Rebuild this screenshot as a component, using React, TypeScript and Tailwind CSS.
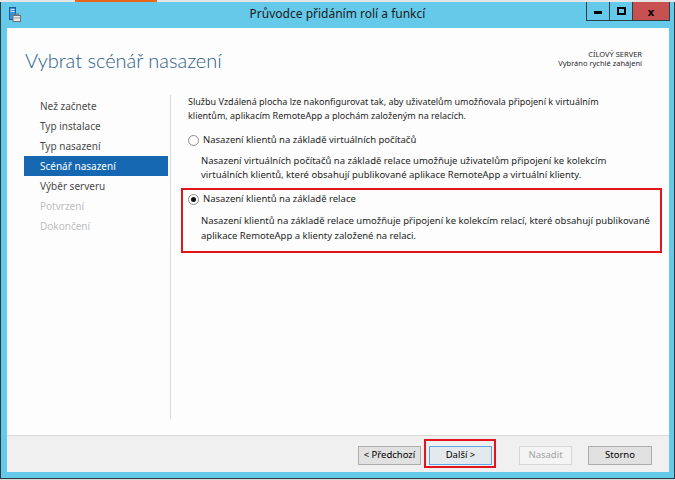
import React from "react";

type StepState = "done" | "active" | "disabled";

const steps: { label: string; state: StepState }[] = [
  { label: "Než začnete", state: "done" },
  { label: "Typ instalace", state: "done" },
  { label: "Typ nasazení", state: "done" },
  { label: "Scénář nasazení", state: "active" },
  { label: "Výběr serveru", state: "done" },
  { label: "Potvrzení", state: "disabled" },
  { label: "Dokončení", state: "disabled" },
];

// malá ikonka v titulku okna (server + kufřík)
const TitleIcon = () => (
  <svg width="12" height="15" viewBox="0 0 12 15">
    <rect x="0.5" y="0.5" width="6" height="12" fill="#3d8fd6" stroke="#1d5e98" />
    <rect x="1.5" y="2" width="4" height="1" fill="#cfe6fa" />
    <rect x="1.5" y="4" width="4" height="1" fill="#cfe6fa" />
    <rect x="4" y="8.5" width="7.5" height="6" fill="#e9e9e9" stroke="#6f6f6f" />
    <rect x="6" y="7" width="3.5" height="1.5" fill="none" stroke="#6f6f6f" />
    <rect x="4.5" y="10.5" width="6.5" height="1" fill="#9a9a9a" />
  </svg>
);

const Radio = ({ checked }: { checked?: boolean }) => (
  <span className="w-[11px] h-[11px] rounded-full border border-[#8c8c8c] bg-white flex items-center justify-center shrink-0">
    {checked && <span className="w-[5px] h-[5px] rounded-full bg-[#111]" />}
  </span>
);

const App = () => {
  return (
    <div className="w-[675px] h-[480px] bg-[#d8d8d8] overflow-hidden font-['Noto_Sans',sans-serif]">
      {/* proužek plochy nad oknem */}
      <div className="h-[2px] bg-[#e6e6e6] flex">
        <div className="ml-[75px] w-[82px] bg-[#e8651c]" />
      </div>

      <div className="h-[477px] bg-[#65c9ea] border-x border-b border-[#2e3a40] flex flex-col">
        {/* titulek */}
        <div className="h-[26px] grid grid-cols-[1fr_auto_1fr]">
          <div className="pl-[8px] pt-[5px]">
            <TitleIcon />
          </div>
          <div className="text-[12px] leading-[24px] text-[#1b1b1b]">
            Průvodce přidáním rolí a funkcí
          </div>
          <div className="flex justify-end items-start pr-[4px]">
            <div className="w-[23px] h-[19px] border-l border-b border-[#2b3f48] flex items-center justify-center">
              <span className="w-[8px] h-[3px] bg-black mt-[2px]" />
            </div>
            <div className="w-[23px] h-[19px] border-l border-b border-[#2b3f48] flex items-center justify-center">
              <span className="w-[9px] h-[8px] border-2 border-black" />
            </div>
            <div className="w-[38px] h-[19px] border-x border-b border-[#2b3f48] bg-[#c75050] flex items-center justify-center text-[11px] font-bold leading-none text-black">
              x
            </div>
          </div>
        </div>

        {/* obsah okna */}
        <div className="ml-[6px] mr-[5px] h-[444px] flex flex-col">
          <div className="h-[407px] bg-[#fdfdfd] flex flex-col">
            <div className="h-[67px] flex justify-between pl-[18px] pr-[27px]">
              <h1 className="pt-[20px] font-['Lato',sans-serif] font-light text-[20px] leading-[24px] text-[#2b5c85]">
                Vybrat scénář nasazení
              </h1>
              <div className="pt-[22px] text-right text-[7.5px] leading-[9px] text-[#2a2a2a]">
                <div>CÍLOVÝ SERVER</div>
                <div>Vybráno rychlé zahájení</div>
              </div>
            </div>

            <div className="flex">
              <div className="w-[163px] pl-[17px] pt-[1px]">
                {steps.map((s) => (
                  <div
                    key={s.label}
                    className={`w-[144px] h-[20px] pl-[16px] text-[10px] leading-[20px] ${
                      s.state === "active"
                        ? "bg-[#1467b0] text-white"
                        : s.state === "disabled"
                        ? "text-[#bdbdbd]"
                        : "text-[#4a4a4a]"
                    }`}
                  >
                    {s.label}
                  </div>
                ))}
              </div>

              <div className="w-px h-[324px] bg-[#dadada]" />

              <div className="ml-[10px] w-[481px] text-[9.5px] text-[#1e1e1e] whitespace-nowrap">
                <p className="pl-[7px] text-[9px] leading-[14px]">
                  Službu Vzdálená plocha lze nakonfigurovat tak, aby uživatelům umožňovala připojení k virtuálním
                  <br />
                  klientům, aplikacím RemoteApp a plochám založeným na relacích.
                </p>

                <div className="mt-[10px] pl-[7px] h-[14px] flex items-center gap-[4px]">
                  <Radio />
                  <span>Nasazení klientů na základě virtuálních počítačů</span>
                </div>
                <p className="mt-[7px] pl-[20px] leading-[14px]">
                  Nasazení virtuálních počítačů na základě relace umožňuje uživatelům připojení ke kolekcím
                  <br />
                  virtuálních klientů, které obsahují publikované aplikace RemoteApp a virtuální klienty.
                </p>

                <div className="mt-[6px] border-2 border-[#e3151c] pt-[2px] pb-[8px]">
                  <div className="pl-[5px] h-[14px] flex items-center gap-[4px]">
                    <Radio checked />
                    <span>Nasazení klientů na základě relace</span>
                  </div>
                  <p className="mt-[7px] pl-[18px] leading-[15px]">
                    Nasazení klientů na základě relace umožňuje připojení ke kolekcím relací, které obsahují publikované
                    <br />
                    aplikace RemoteApp a klienty založené na relaci.
                  </p>
                </div>
              </div>
            </div>
          </div>

          {/* tlačítka */}
          <div className="h-[37px] border-t border-[#dadada] bg-[#f0f0f0] flex justify-end items-start pt-[10px] pr-[17px] text-[9.5px]">
            <button className="w-[63px] h-[19px] border border-[#adadad] bg-[#e1e1e1] text-black">
              &lt; Předchozí
            </button>
            <div className="relative ml-[8px]">
              <button className="w-[63px] h-[19px] border border-[#5ea6e6] bg-[#e4e9ee] text-black">
                Další &gt;
              </button>
              <span className="absolute -left-[5px] -right-[4px] -top-[7px] -bottom-[3px] border-2 border-[#e3151c] pointer-events-none" />
            </div>
            <button disabled className="ml-[27px] w-[53px] h-[19px] border border-[#d6d6d6] bg-[#f4f4f4] text-[#a3a3a3]">
              Nasadit
            </button>
            <button className="ml-[16px] w-[64px] h-[19px] border border-[#adadad] bg-[#e1e1e1] text-black">
              Storno
            </button>
          </div>
        </div>
      </div>
    </div>
  );
};

export default App;
